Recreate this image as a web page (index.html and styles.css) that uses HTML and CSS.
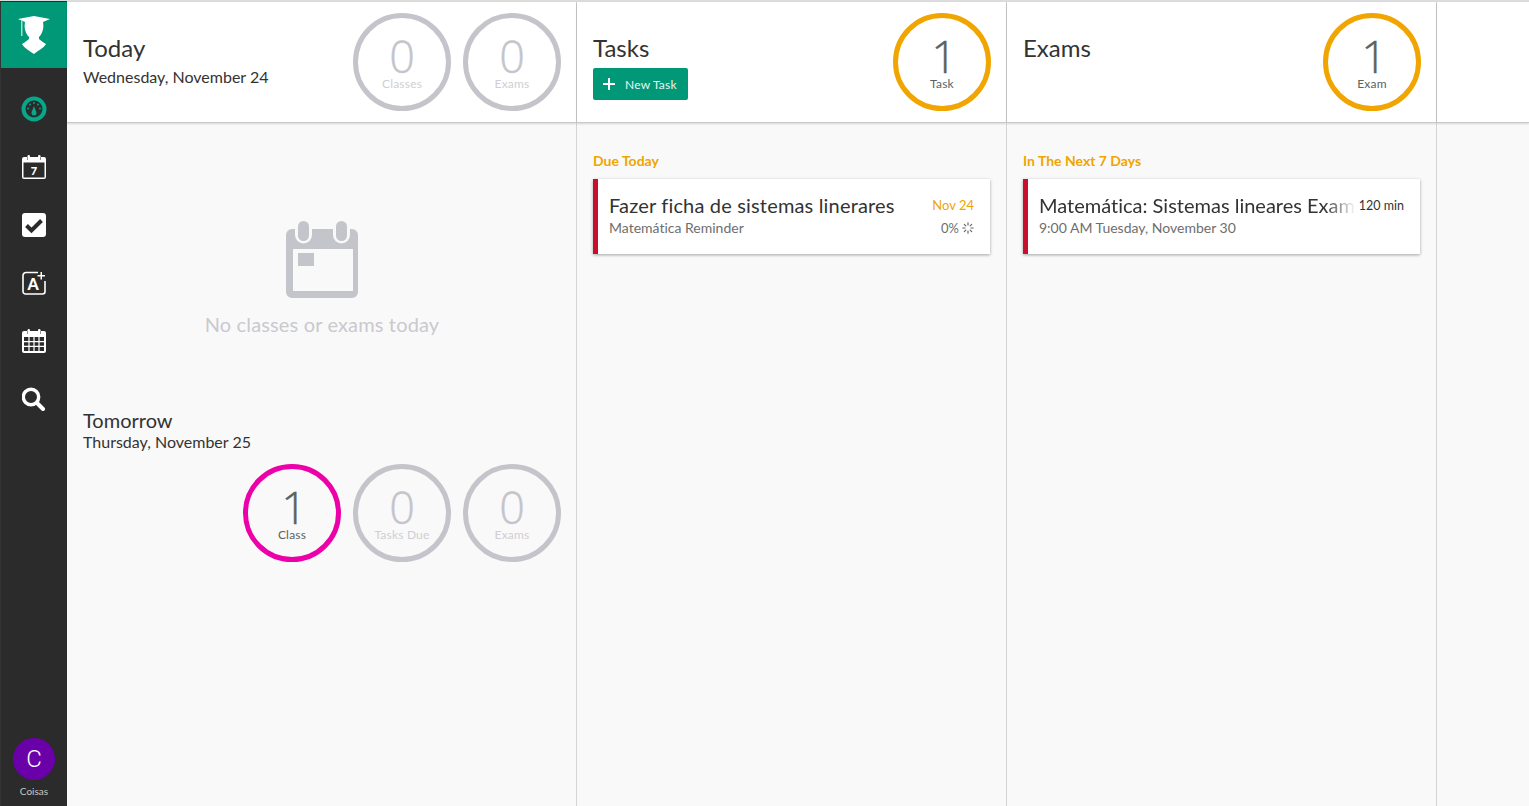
FILE: index.html
```html
<!DOCTYPE html>
<html lang="en">
<head>
    <meta charset="UTF-8">
    <meta name="viewport" content="width=device-width, initial-scale=1.0">
    <title>Overview</title>
    <link rel="stylesheet" href="styles.css">
</head>
<body>
    <div class="app">
        <!-- left nav -->
        <aside class="sidebar">
            <div class="logo">
                <svg width="34" height="40" viewBox="0 0 34 40">
                    <path fill="#fff" d="M1 4 L17 1 L33 4 L26 7 C27 12 26 18 22 22 L22 24 C24 26 26 27 29 29 C26 34 20 36 17 39 C13 36 8 34 5 29 C8 27 10 26 12 24 L12 22 C8 18 7 12 8 7 Z"/>
                    <path fill="#a5dccb" d="M4 5h1.5v16H4z"/>
                </svg>
            </div>
            <nav class="nav">
                <a class="nav-item">
                    <svg width="26" height="26" viewBox="0 0 26 26">
                        <circle cx="13" cy="13" r="10.5" fill="none" stroke="#07a78a" stroke-width="4"/>
                        <path fill="#07a78a" d="M13 10 C13.8 13 15.5 15 15.5 17 A2.5 2.5 0 0 1 10.5 17 C10.5 15 12.2 13 13 10Z"/>
                        <circle cx="7" cy="12.5" r=".9" fill="#07a78a"/><circle cx="9" cy="8.5" r=".9" fill="#07a78a"/>
                        <circle cx="13" cy="7" r=".9" fill="#07a78a"/><circle cx="17" cy="8.5" r=".9" fill="#07a78a"/>
                        <circle cx="19" cy="12.5" r=".9" fill="#07a78a"/>
                    </svg>
                </a>
                <a class="nav-item">
                    <svg width="24" height="26" viewBox="0 0 24 26">
                        <path fill="#fff" d="M2 3h3v3h3V3h8v3h3V3h3a2 2 0 0 1 2 2v18a2 2 0 0 1-2 2H2a2 2 0 0 1-2-2V5a2 2 0 0 1 2-2z"/>
                        <rect x="1.5" y="8.5" width="21" height="15" fill="#2b2b2b"/>
                        <rect x="5.5" y="1" width="2.5" height="6" rx="1.2" fill="#fff"/>
                        <rect x="16" y="1" width="2.5" height="6" rx="1.2" fill="#fff"/>
                        <text x="12" y="21" class="cal-num">7</text>
                    </svg>
                </a>
                <a class="nav-item">
                    <svg width="24" height="24" viewBox="0 0 24 24">
                        <rect width="24" height="24" rx="3" fill="#fff"/>
                        <path fill="none" stroke="#2b2b2b" stroke-width="4" d="M4.5 12.5l5 5 10-10"/>
                    </svg>
                </a>
                <a class="nav-item">
                    <svg width="24" height="24" viewBox="0 0 24 24">
                        <path fill="none" stroke="#fff" stroke-width="1.6" d="M16 1.5H4A3 3 0 0 0 1 4.5v16a2.5 2.5 0 0 0 2.5 2.5h17a2.5 2.5 0 0 0 2.5-2.5V10"/>
                        <path fill="#fff" d="M18.5 1h1.5v3h3v1.5h-3v3h-1.5v-3h-3V4h3z"/>
                        <text x="11" y="18.5" class="a-mark">A</text>
                    </svg>
                </a>
                <a class="nav-item">
                    <svg width="24" height="26" viewBox="0 0 24 26">
                        <path fill="#fff" d="M2 3h3v3h3V3h8v3h3V3h3a2 2 0 0 1 2 2v18a2 2 0 0 1-2 2H2a2 2 0 0 1-2-2V5a2 2 0 0 1 2-2z"/>
                        <rect x="5.5" y="1" width="2.5" height="6" rx="1.2" fill="#fff"/>
                        <rect x="16" y="1" width="2.5" height="6" rx="1.2" fill="#fff"/>
                        <rect x="2" y="9" width="20" height="14" fill="#2b2b2b"/>
                        <path fill="none" stroke="#fff" stroke-width="1.2" d="M2 13.7h20M2 18.3h20M7 9v14M12 9v14M17 9v14"/>
                    </svg>
                </a>
                <a class="nav-item">
                    <svg width="24" height="24" viewBox="1 0 24 24">
                        <circle cx="10" cy="10" r="7.7" fill="none" stroke="#fff" stroke-width="3.4"/>
                        <path stroke="#fff" stroke-width="4" stroke-linecap="round" d="M16 16l6 6"/>
                    </svg>
                </a>
            </nav>
            <div class="account">
                <div class="avatar">C</div>
                <div class="account-name">Coisas</div>
            </div>
        </aside>

        <main class="content">
            <!-- today column -->
            <section class="column column-today">
                <header class="col-head">
                    <div class="head-text">
                        <h2>Today</h2>
                        <p class="head-date">Wednesday, November 24</p>
                    </div>
                    <div class="circles">
                        <div class="circle off"><span class="num">0</span><span class="lbl">Classes</span></div>
                        <div class="circle off"><span class="num">0</span><span class="lbl">Exams</span></div>
                    </div>
                </header>
                <div class="col-body today-body">
                    <div class="empty">
                        <svg width="73" height="79" viewBox="0 0 73 79">
                            <path fill="#c4c4cb" fill-rule="evenodd" d="M6 9h3v6a8.5 8.5 0 0 0 17 0V9h21v6a8.5 8.5 0 0 0 17 0V9h2a6 6 0 0 1 6 6v57a6 6 0 0 1-6 6H6a6 6 0 0 1-6-6V15a6 6 0 0 1 6-6zM7 29v42h60V29z"/>
                            <rect x="12" y="33" width="16" height="13" fill="#c4c4cb"/>
                            <rect x="12" y="1" width="11" height="20" rx="5.5" fill="#c4c4cb"/>
                            <rect x="50" y="1" width="11" height="20" rx="5.5" fill="#c4c4cb"/>
                        </svg>
                        <p>No classes or exams today</p>
                    </div>
                    <div class="tomorrow">
                        <h3>Tomorrow</h3>
                        <p>Thursday, November 25</p>
                    </div>
                    <div class="circles circles-end">
                        <div class="circle pink"><span class="num one">1</span><span class="lbl">Class</span></div>
                        <div class="circle off"><span class="num">0</span><span class="lbl">Tasks Due</span></div>
                        <div class="circle off"><span class="num">0</span><span class="lbl">Exams</span></div>
                    </div>
                </div>
            </section>

            <!-- tasks column -->
            <section class="column">
                <header class="col-head">
                    <div class="head-text">
                        <h2>Tasks</h2>
                        <button class="new-btn"><span class="plus"></span>New Task</button>
                    </div>
                    <div class="circles">
                        <div class="circle amber"><span class="num one">1</span><span class="lbl">Task</span></div>
                    </div>
                </header>
                <div class="col-body">
                    <div class="group-title">Due Today</div>
                    <div class="card">
                        <div class="card-row">
                            <div class="card-title">Fazer ficha de sistemas linerares</div>
                            <div class="card-date">Nov 24</div>
                        </div>
                        <div class="card-row">
                            <div class="card-sub">Matemática Reminder</div>
                            <div class="card-progress">0%
                                <svg width="12" height="12" viewBox="0 0 12 12">
                                    <path stroke="#666" stroke-width="1.2" stroke-linecap="round" d="M6 .8v2.2M6 9v2.2M.8 6H3M9 6h2.2M2.3 2.3l1.5 1.5M8.2 8.2l1.5 1.5M2.3 9.7l1.5-1.5M8.2 3.8l1.5-1.5"/>
                                </svg>
                            </div>
                        </div>
                    </div>
                </div>
            </section>

            <!-- exams column -->
            <section class="column">
                <header class="col-head">
                    <div class="head-text">
                        <h2>Exams</h2>
                    </div>
                    <div class="circles">
                        <div class="circle amber"><span class="num one">1</span><span class="lbl">Exam</span></div>
                    </div>
                </header>
                <div class="col-body">
                    <div class="group-title">In The Next 7 Days</div>
                    <div class="card">
                        <div class="card-row">
                            <div class="card-title fade">Matemática: Sistemas lineares Exam</div>
                            <div class="card-mins">120 min</div>
                        </div>
                        <div class="card-row">
                            <div class="card-sub">9:00 AM Tuesday, November 30</div>
                        </div>
                    </div>
                </div>
            </section>

            <section class="column-rest">
                <div class="rest-head"></div>
            </section>
        </main>
    </div>
</body>
</html>
```

FILE: styles.css
```css
*{
    margin: 0px;
    padding: 0px;
    box-sizing: border-box;
}
html,body{
    height: 100%;
    overflow: hidden;
}
body{
    font-family: "Lato", "Open Sans", sans-serif;
    font-variant-ligatures: none;
    color: #333;
    background: #f9f9f9;
}
.app{
    display: flex;
    height: 806px;
    border-top: 2px solid #dcdcdc;
}

/* sidebar */
.sidebar{
    width: 67px;
    flex: none;
    margin-top: -1px;
    padding-top: 1px;
    background: #2b2b2b;
    border-left: 1px solid #333;
    display: flex;
    flex-direction: column;
}
.logo{
    height: 66px;
    background: #009877;
    display: flex;
    align-items: center;
    justify-content: center;
}
.nav{
    padding-top: 12px;
}
.nav-item{
    height: 58px;
    display: flex;
    align-items: center;
    justify-content: center;
}
.cal-num{
    font-size: 11px;
    font-weight: 900;
    fill: #fff;
    text-anchor: middle;
}
.a-mark{
    font-size: 16px;
    font-weight: 900;
    fill: #fff;
    text-anchor: middle;
}
.account{
    margin-top: auto;
    padding-bottom: 9px;
    text-align: center;
}
.avatar{
    width: 42px;
    height: 42px;
    margin: 0 auto 5px;
    border-radius: 50%;
    background: #6a00a8;
    color: #fff;
    font-family: "Roboto", sans-serif;
    font-size: 24px;
    font-weight: 300;
    line-height: 42px;
}
.account-name{
    font-size: 10px;
    color: #c8c8c8;
}

/* columns */
.content{
    flex: 1;
    display: flex;
    min-width: 0;
}
.column{
    width: 430px;
    flex: none;
    border-right: 1px solid #d3d6d6;
}
.column-today{
    width: 510px;
}
.column-rest{
    flex: 1;
}
.col-head,.rest-head{
    height: 121px;
    background: #fff;
    border-bottom: 1px solid #c9c9c9;
    box-shadow: 0 1px 2px rgba(0,0,0,.15);
}
.col-head{
    display: flex;
    justify-content: space-between;
    padding: 11px 15px 0 16px;
    position: relative;
}
h2{
    font-size: 24px;
    font-weight: 400;
    line-height: 30px;
    margin-top: 20px;
}
.head-date{
    font-size: 16px;
    line-height: 20px;
    margin-top: 4px;
}
.new-btn{
    display: flex;
    align-items: center;
    width: 95px;
    height: 32px;
    margin-top: 5px;
    padding-left: 10px;
    border: none;
    border-radius: 2px;
    background: #009877;
    color: #e8f5f1;
    font-family: inherit;
    font-size: 12px;
    letter-spacing: .2px;
}
.plus{
    width: 12px;
    height: 12px;
    margin-right: 10px;
    background:
        linear-gradient(#fff,#fff) center/12px 2px no-repeat,
        linear-gradient(#fff,#fff) center/2px 12px no-repeat;
}

/* count circles */
.circles{
    display: flex;
    gap: 12px;
}
.circles-end{
    justify-content: flex-end;
    margin-top: 13px;
}
.circle{
    width: 98px;
    height: 98px;
    border: 5px solid #c4c4cb;
    border-radius: 50%;
    display: flex;
    flex-direction: column;
    align-items: center;
    color: #59635f;
}
.circle.off{
    color: #c4c4cb;
}
.circle.pink{
    border-color: #ec00a8;
}
.circle.amber{
    border-color: #f0a500;
}
.num{
    font-family: "Open Sans", sans-serif;
    font-size: 45px;
    font-weight: 300;
    -webkit-text-stroke: .4px currentColor;
    line-height: 38px;
    margin-top: 19px;
}
.num.one{
    margin-left: 4px;
}
.lbl{
    font-size: 12px;
    letter-spacing: .2px;
    line-height: 14px;
    margin-top: 2px;
}
.off .lbl{
    color: #cfcfd3;
}

/* today body */
.col-body{
    padding: 29px 16px 0;
}
.today-body{
    padding: 97px 15px 0 16px;
}
.empty{
    text-align: center;
    color: #c9c9ce;
    font-size: 20px;
    letter-spacing: .15px;
}
.empty svg{
    display: block;
    margin: 0 auto 13px;
}
.tomorrow{
    margin-top: 72px;
}
.tomorrow h3{
    font-size: 20px;
    font-weight: 400;
    line-height: 24px;
}
.tomorrow p{
    font-size: 16px;
    line-height: 19px;
}

/* cards */
.group-title{
    color: #f0a500;
    font-size: 14px;
    font-weight: 700;
    line-height: 18px;
    margin-bottom: 9px;
}
.card{
    height: 75px;
    padding: 13px 16px 0 11px;
    background: #fff;
    border-left: 5px solid #c8102e;
    box-shadow: 0 1px 3px rgba(0,0,0,.35);
}
.card-row{
    display: flex;
    justify-content: space-between;
    align-items: center;
}
.card-title{
    font-size: 20px;
    letter-spacing: .17px;
    line-height: 26px;
    white-space: nowrap;
    overflow: hidden;
}
.card-title.fade{
    width: 317px;
    flex: none;
    letter-spacing: 0;
    -webkit-mask-image: linear-gradient(to right,#000 90%,transparent 100%);
    mask-image: linear-gradient(to right,#000 90%,transparent 100%);
}
.card-date{
    color: #f0a500;
    font-size: 13px;
}
.card-mins{
    font-size: 12.5px;
}
.card-sub{
    color: #6e6e6e;
    font-size: 14px;
    line-height: 18px;
    margin-top: 1px;
}
.card-progress{
    display: flex;
    align-items: center;
    gap: 3px;
    color: #6e6e6e;
    font-size: 13px;
}
```
